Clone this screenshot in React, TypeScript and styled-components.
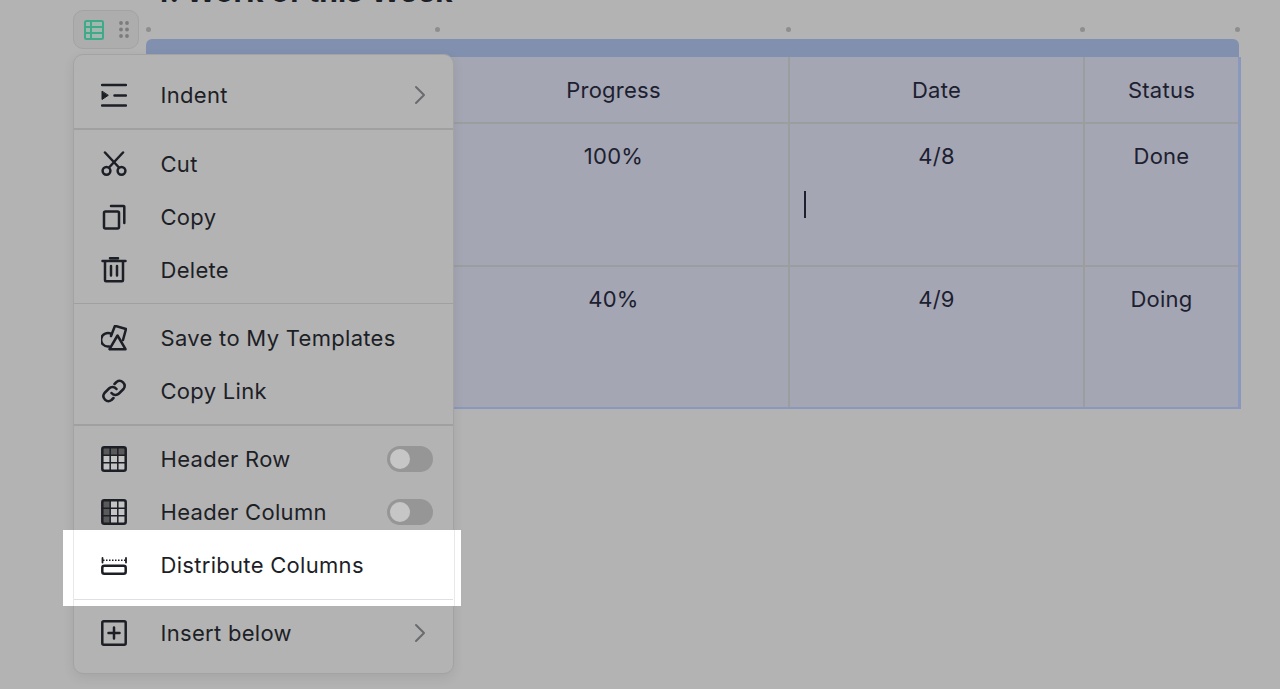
import React from 'react'
import styled, { createGlobalStyle } from 'styled-components'

const GlobalStyle = createGlobalStyle`
  html, body {
    margin: 0;
    padding: 0;
    background: #b3b3b3;
  }
  body {
    font-family: Inter, 'Liberation Sans', sans-serif;
    color: #1d1f27;
  }
`

const Page = styled.div`
  position: relative;
  width: 1280px;
  height: 689px;
  overflow: hidden;
  background: #b3b3b3;
`

const Editor = styled.main`
  display: flex;
  flex-direction: column;
  width: 1095px;
  margin-left: 146px;
`

const Heading = styled.h2`
  margin: -27px 0 0 4px;
  height: 51px;
  font-size: 30px;
  line-height: 36px;
  font-weight: 700;
  color: #1d1f27;
  white-space: nowrap;
`

const GaugeRow = styled.div`
  display: flex;
  height: 10px;
  margin-bottom: 5px;
  align-items: center;
`

const GaugeDot = styled.span<{ $gap: number }>`
  width: 5px;
  height: 5px;
  border-radius: 50%;
  background: #8e8e8e;
  margin-left: ${(p) => p.$gap}px;
`

const TableBar = styled.div`
  width: 1093px;
  height: 18px;
  border-radius: 6px 6px 0 0;
  background: #8290b0;
`

const Table = styled.div`
  display: grid;
  grid-template-columns: 293px 351px 295px 1fr;
  grid-template-rows: 65px 143px 142px;
  width: 1095px;
  background: #a4a6b3;
  border-right: 3px solid #8a98bd;
  border-bottom: 2px solid #8a98bd;
  box-sizing: border-box;
`

const Cell = styled.div`
  position: relative;
  box-sizing: border-box;
  padding-top: 19px;
  font-size: 22px;
  line-height: 28px;
  letter-spacing: 0.25px;
  text-align: center;
  color: #1d2030;
  border-right: 2px solid #9c9d9f;

  &:nth-child(4n) {
    border-right: none;
  }
  &:nth-child(n + 5) {
    padding-top: 18px;
    border-top: 2px solid #9c9d9f;
  }
`

const Caret = styled.span`
  position: absolute;
  left: 14px;
  top: 67px;
  width: 2px;
  height: 27px;
  background: #1d2030;
`

const BlockHandle = styled.div`
  position: absolute;
  left: 73px;
  top: 10px;
  box-sizing: border-box;
  width: 66px;
  height: 39px;
  display: flex;
  align-items: center;
  gap: 15px;
  padding-left: 10px;
  border: 1.5px solid #a3a3a3;
  border-radius: 10px;
  background: #adadad;
`

const Menu = styled.nav`
  position: absolute;
  left: 73px;
  top: 54px;
  box-sizing: border-box;
  width: 381px;
  height: 620px;
  padding-top: 13px;
  border: 1.5px solid #a3a3a3;
  border-radius: 10px;
  background: #b3b3b3;
  box-shadow: 0 4px 12px rgba(0, 0, 0, 0.08);
`

const MenuRow = styled.div`
  display: flex;
  align-items: center;
  height: 53px;
  padding: 0 20px 0 27px;
  font-size: 22px;
  color: #1d1f27;
`

const IconSlot = styled.span`
  display: flex;
  width: 26px;
  height: 26px;
  margin-right: 33.5px;
  color: #1d1f27;
`

const Label = styled.span`
  flex: 1;
  letter-spacing: 0.3px;
  white-space: nowrap;
`

const Divider = styled.div<{ $before?: number; $after?: number }>`
  height: 1.5px;
  margin: ${(p) => p.$before ?? 7}px 0 ${(p) => p.$after ?? 7}px;
  background: #a0a0a0;
`

const Toggle = styled.span`
  display: flex;
  align-items: center;
  width: 46px;
  height: 26px;
  box-sizing: border-box;
  padding-left: 3px;
  border-radius: 13px;
  background: #969696;

  &::before {
    content: '';
    width: 20px;
    height: 20px;
    border-radius: 50%;
    background: #c6c6c6;
  }
`

const Spotlit = styled.div`
  position: relative;
  isolation: isolate;
`

const Spotlight = styled.div`
  position: absolute;
  z-index: -1;
  left: -11px;
  right: -8px;
  top: -9px;
  bottom: -6px;
  background: #fff;

  &::before {
    content: '';
    position: absolute;
    left: 9.5px;
    right: 6.5px;
    top: 0;
    bottom: 0;
    border-left: 1.5px solid #e9e9e9;
    border-right: 1.5px solid #e9e9e9;
  }
`

const SpotlitDivider = styled(Divider)`
  background: #dfe0e4;
  margin-bottom: 0;
`

const LastGroup = styled.div`
  padding-top: 6px;
`

const ChevronSlot = styled.span`
  display: flex;
  margin-right: 7px;
`

function Icon({ children }: { children: React.ReactNode }) {
  return (
    <IconSlot>
      <svg
        width='26'
        height='26'
        viewBox='0 0 26 26'
        fill='none'
        stroke='currentColor'
        strokeWidth='2.5'
        strokeLinecap='round'
        strokeLinejoin='round'
      >
        {children}
      </svg>
    </IconSlot>
  )
}

function HeaderGridIcon({ dark }: { dark: 'row' | 'col' }) {
  const cells = []
  for (let r = 0; r < 3; r++) {
    for (let c = 0; c < 3; c++) {
      const isHeader = dark === 'row' ? r === 0 : c === 0
      cells.push(
        <rect
          key={`${r}-${c}`}
          x={2 + c * 7.5}
          y={2 + r * 7.5}
          width='7'
          height='7'
          fill={isHeader ? '#5a5a5a' : '#c4c4c4'}
          stroke='none'
        />
      )
    }
  }
  return (
    <Icon>
      {cells}
      <rect x='1.3' y='1.3' width='23.4' height='23.4' rx='2' />
      <path d='M9.2 2v22M16.8 2v22M2 9.2h22M2 16.8h22' strokeWidth='1.5' strokeLinecap='butt' />
    </Icon>
  )
}

function Chevron() {
  return (
    <ChevronSlot>
      <svg width='12' height='20' viewBox='0 0 12 20' fill='none' stroke='#696b6f' strokeWidth='2' strokeLinecap='round' strokeLinejoin='round'>
        <path d='M2 2l8 8-8 8' />
      </svg>
    </ChevronSlot>
  )
}

const IndentIcon = () => (
  <Icon>
    <path d='M1 3h24M13.5 13.5h11.5M1 23.5h24' />
    <path d='M1 9.5v8l6-4z' fill='currentColor' strokeWidth='1' />
  </Icon>
)

const CutIcon = () => (
  <Icon>
    <circle cx='5.5' cy='19.8' r='3.9' />
    <circle cx='20.5' cy='19.8' r='3.9' />
    <path d='M4 1.5l13.5 14.5M22 1.5L8.5 16' />
  </Icon>
)

const CopyIcon = () => (
  <Icon>
    <rect x='3' y='7.5' width='15' height='17' rx='1.5' />
    <path d='M10 2h12.5a.8.8 0 0 1 .8.8V19' />
  </Icon>
)

const DeleteIcon = () => (
  <Icon>
    <path d='M1.5 4h23M9 1.2h8' />
    <path d='M4 4.5v18.8a1 1 0 0 0 1 1h16a1 1 0 0 0 1-1V4.5' />
    <path d='M10 9v9.5M16 9v9.5' />
  </Icon>
)

const TemplateIcon = () => (
  <Icon>
    <path d='M8 21.5a6.8 6.8 0 1 1 2.5-12.5' />
    <path d='M10 11L14 .8l11 3.2-3 11' />
    <path d='M16.5 10.5L8.5 24.2h16z' />
  </Icon>
)

const LinkIcon = () => (
  <Icon>
    <path d='M10.5 15a5 5 0 0 0 7.5.5l4.5-4.5a5 5 0 0 0-7-7L13.5 6' />
    <path d='M15.5 11a5 5 0 0 0-7.5-.5L3.5 15a5 5 0 0 0 7 7l2-2' />
  </Icon>
)

const DistributeIcon = () => (
  <Icon>
    <path d='M1.5 6v4.5M25 6v4.5' strokeWidth='1.8' />
    <path d='M2 8.2h23' strokeWidth='1.4' strokeDasharray='1.5 1.5' strokeLinecap='butt' />
    <rect x='1.3' y='13.8' width='23.4' height='8' rx='2' />
  </Icon>
)

const InsertIcon = () => (
  <Icon>
    <rect x='1.3' y='1.3' width='23.4' height='23.4' rx='1.5' />
    <path d='M13 7.5v11M7.5 13h11' />
  </Icon>
)

const columns = ['Progress', 'Date', 'Status']
const rows = [
  ['100%', '4/8', 'Done'],
  ['40%', '4/9', 'Doing'],
]

function App() {
  return (
    <Page>
      <GlobalStyle />
      <Editor>
        <Heading>4. Work of this Week</Heading>
        <GaugeRow>
          <GaugeDot $gap={0} />
          <GaugeDot $gap={284} />
          <GaugeDot $gap={346} />
          <GaugeDot $gap={289} />
          <GaugeDot $gap={150} />
        </GaugeRow>
        <TableBar />
        <Table>
          <Cell />
          {columns.map((c) => (
            <Cell key={c}>{c}</Cell>
          ))}
          {rows.map((row, i) => (
            <React.Fragment key={row[0]}>
              <Cell />
              {row.map((v, j) => (
                <Cell key={v}>
                  {v}
                  {i === 0 && j === 1 && <Caret />}
                </Cell>
              ))}
            </React.Fragment>
          ))}
        </Table>
      </Editor>

      <BlockHandle>
        <svg width='20' height='20' viewBox='0 0 20 20' fill='#a2b8ae' stroke='#3fa98a' strokeWidth='2'>
          <rect x='1' y='1' width='18' height='18' rx='1.5' />
          <path d='M1 7h18M1 13h18M7 1v18' fill='none' />
        </svg>
        <svg width='10' height='17' viewBox='0 0 10 17' fill='#7c7c7c'>
          <circle cx='2' cy='2' r='1.9' />
          <circle cx='8' cy='2' r='1.9' />
          <circle cx='2' cy='8.5' r='1.9' />
          <circle cx='8' cy='8.5' r='1.9' />
          <circle cx='2' cy='15' r='1.9' />
          <circle cx='8' cy='15' r='1.9' />
        </svg>
      </BlockHandle>

      <Menu>
        <MenuRow>
          <IndentIcon />
          <Label>Indent</Label>
          <Chevron />
        </MenuRow>
        <Divider $after={8} />
        <MenuRow>
          <CutIcon />
          <Label>Cut</Label>
        </MenuRow>
        <MenuRow>
          <CopyIcon />
          <Label>Copy</Label>
        </MenuRow>
        <MenuRow>
          <DeleteIcon />
          <Label>Delete</Label>
        </MenuRow>
        <Divider $before={6} />
        <MenuRow>
          <TemplateIcon />
          <Label>Save to My Templates</Label>
        </MenuRow>
        <MenuRow>
          <LinkIcon />
          <Label>Copy Link</Label>
        </MenuRow>
        <Divider />
        <MenuRow>
          <HeaderGridIcon dark='row' />
          <Label>Header Row</Label>
          <Toggle />
        </MenuRow>
        <MenuRow>
          <HeaderGridIcon dark='col' />
          <Label>Header Column</Label>
          <Toggle />
        </MenuRow>
        <Spotlit>
          <Spotlight />
          <MenuRow>
            <DistributeIcon />
            <Label>Distribute Columns</Label>
          </MenuRow>
          <SpotlitDivider />
        </Spotlit>
        <LastGroup>
          <MenuRow>
            <InsertIcon />
            <Label>Insert below</Label>
            <Chevron />
          </MenuRow>
        </LastGroup>
      </Menu>
    </Page>
  )
}

export default App
